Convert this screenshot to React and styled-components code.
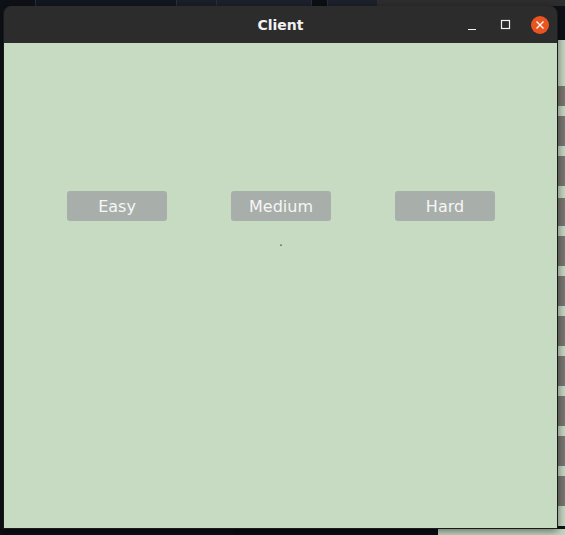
import styled, { createGlobalStyle } from "styled-components";

const GlobalStyle = createGlobalStyle`
  html, body {
    margin: 0;
    padding: 0;
    background: #0e1218;
  }
  body {
    font-family: "DejaVu Sans", "Liberation Sans", sans-serif;
  }
`;

const Desktop = styled.div`
  position: relative;
  width: 565px;
  height: 535px;
  overflow: hidden;
  background: #0e1218;
`;

const TopBar = styled.div`
  display: flex;
  height: 6px;
  background: #151a22;
`;

const Tab = styled.div`
  width: ${(p) => p.w}px;
  background: ${(p) => p.bg};
  border-right: 1px solid #2a2f38;
`;

const SideStrip = styled.div`
  position: absolute;
  right: 0;
  top: 40px;
  width: 8px;
  height: 495px;
  display: flex;
  flex-direction: column;
`;

const Band = styled.div`
  height: ${(p) => p.h}px;
  background: ${(p) => p.bg};
`;

const BottomStrip = styled.div`
  position: absolute;
  left: 0;
  bottom: 0;
  width: 565px;
  height: 6px;
  display: flex;
`;

const Window = styled.div`
  position: absolute;
  left: 3px;
  top: 6px;
  width: 553px;
  height: 522px;
  display: flex;
  flex-direction: column;
  border: 1px solid #1b1b1b;
  border-top: none;
  border-radius: 8px 8px 0 0;
  overflow: hidden;
  box-shadow: 0 2px 8px rgba(0, 0, 0, 0.5);
`;

const TitleBar = styled.div`
  height: 37px;
  flex-shrink: 0;
  background: #2c2c2c;
  display: flex;
  align-items: center;
  justify-content: center;
  position: relative;
`;

const Title = styled.span`
  color: #f2f2f2;
  font-weight: bold;
  font-size: 14px;
`;

const Controls = styled.div`
  position: absolute;
  right: 8px;
  top: 0;
  height: 37px;
  display: flex;
  align-items: center;
  gap: 16px;
`;

const Ctl = styled.div`
  width: 18px;
  height: 18px;
  display: flex;
  align-items: center;
  justify-content: center;
`;

const Close = styled(Ctl)`
  border-radius: 50%;
  background: #e95420;
`;

const Content = styled.div`
  flex: 1;
  background: #c7dbc3;
  display: flex;
  flex-direction: column;
  padding-top: 148px;
`;

const ButtonRow = styled.div`
  display: flex;
  gap: 64px;
  padding-left: 63px;
`;

const LevelButton = styled.button`
  width: 100px;
  height: 30px;
  border: none;
  border-radius: 3px;
  background: #a8aeaa;
  color: #f6f6f6;
  font-family: "DejaVu Sans", sans-serif;
  font-size: 16px;
  padding: 0;
`;

const Status = styled.div`
  margin-top: 14px;
  padding-left: 1px;
  text-align: center;
  font-size: 12px;
  color: #4a504a;
  line-height: 14px;
`;

const stripe = [
  [46, "#c4d6c0"], [20, "#787772"], [10, "#c4d6c0"], [30, "#787772"],
  [10, "#c4d6c0"], [30, "#787772"], [12, "#c4d6c0"], [28, "#787772"],
  [10, "#c4d6c0"], [30, "#787772"], [10, "#c4d6c0"], [30, "#787772"],
  [10, "#c4d6c0"], [30, "#787772"], [10, "#c4d6c0"], [30, "#787772"],
  [10, "#c4d6c0"], [30, "#787772"], [10, "#c4d6c0"], [30, "#787772"],
  [10, "#c4d6c0"], [30, "#787772"], [20, "#c4d6c0"],
];

export default function App() {
  return (
    <>
      <GlobalStyle />
      <Desktop>
        <TopBar>
          <Tab w={35} bg="#0e1218" />
          <Tab w={142} bg="#121720" />
          <Tab w={40} bg="#1b1f29" />
          <Tab w={95} bg="#1c212b" />
          <Tab w={15} bg="#0c0f14" />
          <Tab w={50} bg="#1c212b" />
          <Tab w={188} bg="#2e2e2e" />
        </TopBar>
        <SideStrip>
          {stripe.map(([h, bg], i) => (
            <Band key={i} h={h} bg={bg} />
          ))}
        </SideStrip>
        <BottomStrip>
          <Band h={6} bg="#0c0f14" style={{ width: 233 }} />
          <Band h={6} bg="#0a0d12" style={{ width: 205 }} />
          <Band h={6} bg="#c4d6c0" style={{ width: 127 }} />
        </BottomStrip>
        <Window>
          <TitleBar>
            <Title>Client</Title>
            <Controls>
              <Ctl>
                <svg width="12" height="12" viewBox="0 0 12 12">
                  <line x1="2" y1="10.5" x2="10" y2="10.5" stroke="#f2f2f2" strokeWidth="1" />
                </svg>
              </Ctl>
              <Ctl>
                <svg width="12" height="12" viewBox="0 0 12 12">
                  <rect x="1.5" y="1.5" width="8" height="8" fill="none" stroke="#f2f2f2" strokeWidth="1.2" />
                </svg>
              </Ctl>
              <Close>
                <svg width="10" height="10" viewBox="0 0 10 10">
                  <path d="M1.5 1.5 L8.5 8.5 M8.5 1.5 L1.5 8.5" stroke="#fff" strokeWidth="1.3" />
                </svg>
              </Close>
            </Controls>
          </TitleBar>
          <Content>
            <ButtonRow>
              <LevelButton>Easy</LevelButton>
              <LevelButton>Medium</LevelButton>
              <LevelButton>Hard</LevelButton>
            </ButtonRow>
            <Status>.</Status>
          </Content>
        </Window>
      </Desktop>
    </>
  );
}
